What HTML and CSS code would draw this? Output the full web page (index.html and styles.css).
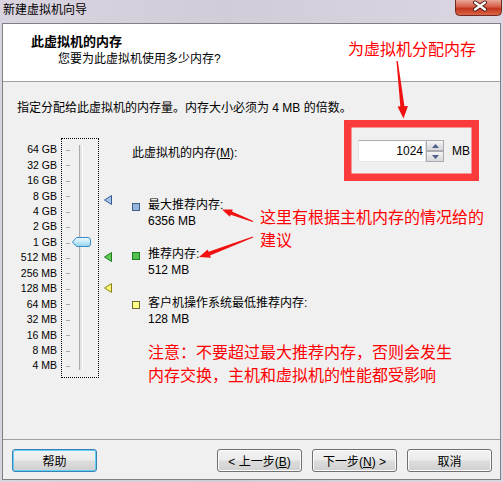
FILE: index.html
```html
<!DOCTYPE html>
<html lang="zh-CN">
<head>
  <meta charset="UTF-8">
  <title>新建虚拟机向导</title>
  <link rel="stylesheet" href="styles.css">
</head>
<body>
  <div class="window">
    <!-- 标题栏 -->
    <div class="titlebar">
      <span class="title">新建虚拟机向导</span>
      <svg class="close" width="47" height="16" viewBox="0 0 47 16">
        <defs>
          <linearGradient id="closeGrad" x1="0" y1="0" x2="0" y2="1">
            <stop offset="0" stop-color="#eaa898"/>
            <stop offset="0.45" stop-color="#d65a44"/>
            <stop offset="0.55" stop-color="#c4361e"/>
            <stop offset="1" stop-color="#dc6a48"/>
          </linearGradient>
        </defs>
        <path d="M0.5 0 V11.5 Q0.5 15.5 4.5 15.5 H42.5 Q46.5 15.5 46.5 11.5 V0" fill="url(#closeGrad)" stroke="#6e2b22"/>
        <path d="M20 2.5 L30 9.5 M30 2.5 L20 9.5" stroke="#4b1c15" stroke-width="4" stroke-linecap="round"/>
        <path d="M20 2.5 L30 9.5 M30 2.5 L20 9.5" stroke="#ffffff" stroke-width="2.2" stroke-linecap="round"/>
      </svg>
    </div>

    <div class="client">
      <!-- 头部 -->
      <div class="header">
        <div class="h-title">此虚拟机的内存</div>
        <div class="h-sub">您要为此虚拟机使用多少内存?</div>
      </div>

      <!-- 内容 -->
      <div class="content">
        <p class="intro">指定分配给此虚拟机的内存量。内存大小必须为 4 MB 的倍数。</p>
        <div class="main">
          <div class="scale">
            <div>64 GB</div>
            <div>32 GB</div>
            <div>16 GB</div>
            <div>8 GB</div>
            <div>4 GB</div>
            <div>2 GB</div>
            <div>1 GB</div>
            <div>512 MB</div>
            <div>256 MB</div>
            <div>128 MB</div>
            <div>64 MB</div>
            <div>32 MB</div>
            <div>16 MB</div>
            <div>8 MB</div>
            <div>4 MB</div>
          </div>

          <div class="slider">
            <svg width="36" height="238" viewBox="0 0 36 238">
              <defs>
                <linearGradient id="thumbGrad" x1="0" y1="0" x2="0" y2="1">
                  <stop offset="0" stop-color="#eef9fe"/>
                  <stop offset="0.5" stop-color="#c4e9fa"/>
                  <stop offset="1" stop-color="#93d2f1"/>
                </linearGradient>
              </defs>
              <g fill="#a8a8a8">
                <rect x="4" y="11" width="4" height="1"/>
                <rect x="4" y="26" width="4" height="1"/>
                <rect x="4" y="42" width="4" height="1"/>
                <rect x="4" y="57" width="4" height="1"/>
                <rect x="4" y="73" width="4" height="1"/>
                <rect x="4" y="88" width="4" height="1"/>
                <rect x="4" y="104" width="4" height="1"/>
                <rect x="4" y="119" width="4" height="1"/>
                <rect x="4" y="134" width="4" height="1"/>
                <rect x="4" y="150" width="4" height="1"/>
                <rect x="4" y="165" width="4" height="1"/>
                <rect x="4" y="181" width="4" height="1"/>
                <rect x="4" y="196" width="4" height="1"/>
                <rect x="4" y="212" width="4" height="1"/>
                <rect x="4" y="227" width="4" height="1"/>
              </g>
              <rect x="17" y="6" width="4" height="225" fill="#e4e4e4"/>
              <rect x="17" y="6" width="1" height="225" fill="#a9a9a9"/>
              <rect x="20" y="6" width="1" height="225" fill="#ffffff"/>
              <path d="M10.5 103 L14.5 98.5 H26 Q28.5 98.5 28.5 101 V105 Q28.5 107.5 26 107.5 H14.5 Z" fill="url(#thumbGrad)" stroke="#3a8cc6"/>
            </svg>
          </div>

          <div class="markers">
            <svg width="10" height="240" viewBox="0 0 10 240">
              <polygon points="1.5,62 8.5,57.5 8.5,66.5" fill="#a9c2e6" stroke="#2f5d92"/>
              <polygon points="1.5,119 8.5,114.5 8.5,123.5" fill="#5fcc4f" stroke="#1f7a1f"/>
              <polygon points="1.5,150 8.5,145.5 8.5,154.5" fill="#f6f46c" stroke="#8a8520"/>
            </svg>
          </div>

          <div class="settings">
            <div class="mem-row">
              <span class="mem-label">此虚拟机的内存(<u>M</u>):</span>
              <input class="mem-input" type="text" value="1024" readonly>
              <span class="spin">
                <span class="spin-btn"><svg width="7" height="4" viewBox="0 0 7 4"><polygon points="3.5,0 7,4 0,4" fill="#4f6189"/></svg></span>
                <span class="spin-btn"><svg width="7" height="4" viewBox="0 0 7 4"><polygon points="0,0 7,0 3.5,4" fill="#4f6189"/></svg></span>
              </span>
              <span class="unit">MB</span>
            </div>

            <div class="legend">
              <div class="legend-item">
                <span class="swatch swatch-max"></span>
                <span>最大推荐内存:<br>6356 MB</span>
              </div>
              <div class="legend-item">
                <span class="swatch swatch-rec"></span>
                <span>推荐内存:<br>512 MB</span>
              </div>
              <div class="legend-item">
                <span class="swatch swatch-min"></span>
                <span>客户机操作系统最低推荐内存:<br>128 MB</span>
              </div>
            </div>

            <p class="note">注意：不要超过最大推荐内存，否则会发生<br>内存交换，主机和虚拟机的性能都受影响</p>
          </div>
        </div>
      </div>

      <!-- 底部按钮 -->
      <div class="footer">
        <button class="btn btn-default">帮助</button>
        <button class="btn btn-back">&lt; 上一步(<u>B</u>)</button>
        <button class="btn">下一步(<u>N</u>) &gt;</button>
        <button class="btn">取消</button>
      </div>
    </div>

    <!-- 红色标注 -->
    <svg class="overlay" width="503" height="482" viewBox="0 0 503 482">
      <rect x="347.75" y="123.75" width="127.5" height="53.5" fill="none" stroke="#fb3b3b" stroke-width="7.5"/>
      <polygon points="396.5,61 397.8,61 404.6,107.5 400.4,107.5" fill="#f01010"/>
      <polygon points="397.5,106.5 408,106 403.5,118.5" fill="#f01010"/>
      <polygon points="253.2,221 232,211.4 232.8,209.4 222,209.5 229.9,216.8 230.7,214.8 252.8,222" fill="#f01010"/>
      <polygon points="252.8,236.5 208.6,251.7 207.7,249.4 199,257 210.9,257.8 210,255.5 253.2,237.5" fill="#f01010"/>
    </svg>
    <div class="anno anno-top">为虚拟机分配内存</div>
    <div class="anno anno-mid">这里有根据主机内存的情况给的<br>建议</div>
  </div>
</body>
</html>
```

FILE: styles.css
```css
* {
  box-sizing: border-box;
}
body {
  margin: 0;
  width: 503px;
  height: 482px;
  overflow: hidden;
  font-family: "Liberation Sans", "Noto Sans CJK SC", sans-serif;
  font-size: 12px;
  color: #000;
}
/* 窗口框架 */
.window {
  position: relative;
  width: 503px;
  height: 482px;
  padding: 0 2px;
  background: linear-gradient(to right, #dad4e0, #d2ccd8 45%, #dcd6e2);
}
.titlebar {
  height: 23px;
  display: flex;
  justify-content: space-between;
}
.title {
  padding-left: 1px;
  line-height: 20px;
}
.close {
  display: block;
  margin-right: -1px;
}
.client {
  height: 457px;
  display: flex;
  flex-direction: column;
  border: 1px solid #7f7f86;
  background: #f0f0f0;
}
/* 头部 */
.header {
  height: 58px;
  padding: 10px 0 0 28px;
  background: #fff;
  border-bottom: 1px solid #a0a0a0;
}
.h-title {
  font-size: 13px;
  font-weight: bold;
  line-height: 16px;
}
.h-sub {
  margin-top: 1px;
  padding-left: 27px;
  line-height: 16px;
}
/* 内容区 */
.content {
  height: 357px;
}
.intro {
  margin: 0 0 0 14px;
  padding-top: 18px;
  line-height: 16px;
}
.main {
  display: flex;
  align-items: flex-start;
  margin-top: 22px;
}
.scale {
  width: 54px;
  padding-top: 4.3px;
  text-align: right;
  font-size: 10.5px;
  line-height: 15.43px;
}
.slider {
  width: 38px;
  height: 240px;
  margin-left: 4px;
  border: 1px dotted #000;
}
.slider svg,
.markers svg {
  display: block;
}
.markers {
  width: 10px;
  margin-left: 4px;
}
.settings {
  margin-left: 19px;
}
.mem-row {
  display: flex;
  align-items: center;
  height: 22px;
  margin-top: 2px;
}
.mem-label {
  width: 226px;
}
.mem-input {
  width: 68px;
  height: 22px;
  margin: 0;
  padding: 0 2px;
  border: 1px solid;
  border-color: #abadb3 #dbdfe6 #e3e9ef #e2e3ea;
  background: #fff;
  text-align: right;
  font-family: "Liberation Sans", sans-serif;
  font-size: 12px;
  color: #000;
}
.spin {
  display: flex;
  flex-direction: column;
  width: 18px;
  height: 22px;
}
.spin-btn {
  display: flex;
  align-items: center;
  justify-content: center;
  height: 11px;
  border: 1px solid #a9abb0;
  background: linear-gradient(#f6f6f6, #e4e4e6 50%, #d8d9dc);
}
.spin-btn svg {
  display: block;
}
.unit {
  margin-left: 8px;
}
/* 推荐内存图例 */
.legend {
  margin-top: 36px;
}
.legend-item {
  display: flex;
  align-items: flex-start;
  line-height: 15.5px;
}
.legend-item + .legend-item {
  margin-top: 18px;
}
.swatch {
  width: 8px;
  height: 8px;
  margin: 5px 8px 0 0;
  border: 1px solid;
}
.swatch-max {
  background: #98b4dc;
  border-color: #3d5e8e;
}
.swatch-rec {
  background: #50c44a;
  border-color: #287a26;
}
.swatch-min {
  background: #ffff8c;
  border-color: #6e6c2a;
}
.note {
  margin: 13px 0 0 16px;
  color: #ff0000;
  font-family: "Noto Sans CJK SC", sans-serif;
  font-size: 16px;
  line-height: 23px;
}
/* 底部按钮 */
.footer {
  height: 40px;
  display: flex;
  gap: 10px;
  padding: 9px 8px 0 9px;
  border-top: 1px solid #a0a0a0;
}
.btn {
  width: 85px;
  height: 23px;
  padding: 0;
  border: 1px solid #707070;
  border-radius: 3px;
  background: linear-gradient(#f2f2f2, #ebebeb 48%, #dddddd 52%, #cfcfcf);
  box-shadow: inset 0 0 0 1px #fbfbfb;
  font-family: "Liberation Sans", "Noto Sans CJK SC", sans-serif;
  font-size: 12px;
  color: #000;
}
.btn-default {
  border-color: #3c7fb1;
  box-shadow: inset 0 0 0 1px #5fd2f8;
}
.btn-back {
  margin-left: auto;
}
/* 红色标注 */
.overlay {
  position: absolute;
  top: 0;
  left: 0;
  pointer-events: none;
}
.anno {
  position: absolute;
  color: #ff0000;
  font-family: "Noto Sans CJK SC", sans-serif;
  font-size: 16px;
  line-height: 20px;
  white-space: nowrap;
}
.anno-top {
  left: 348px;
  top: 38px;
}
.anno-mid {
  left: 260px;
  top: 205px;
  line-height: 23px;
}
```
